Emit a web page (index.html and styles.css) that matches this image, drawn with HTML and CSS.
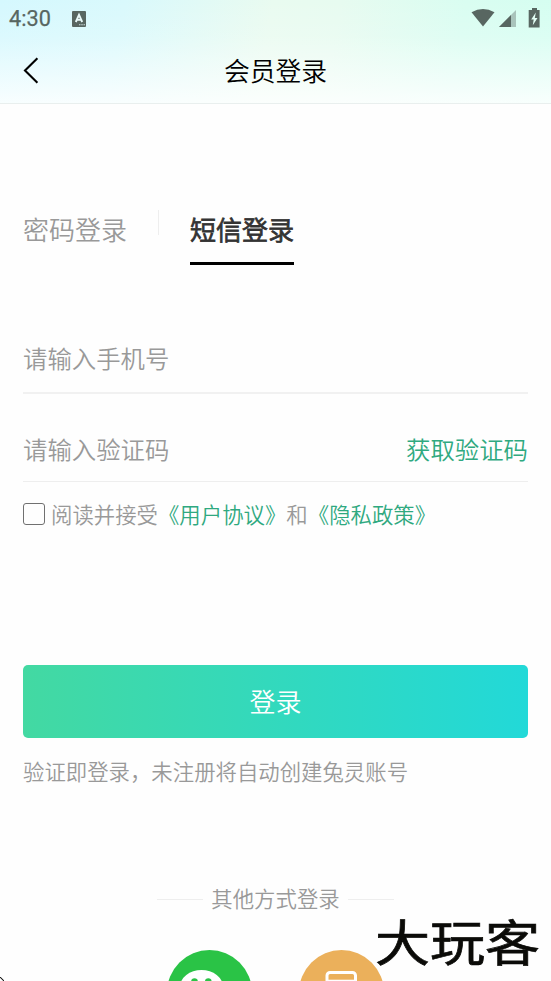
FILE: index.html
```html
<!DOCTYPE html>
<html lang="zh-CN">
<head>
<meta charset="utf-8">
<title>会员登录</title>
<link rel="stylesheet" href="styles.css">
</head>
<body>
<div class="screen">
  <header class="header">
    <div class="status">
      <span class="clock">4:30</span>
      <svg class="app-badge" width="14" height="16" viewBox="0 0 14 16"><rect width="14" height="16" rx="1" fill="#586661"/><path d="M3.8 11 7 3.8l3.2 7.2M4.8 8.9h4.4" fill="none" stroke="#eafafa" stroke-width="1.9"/><path d="M7.2 13.7h1.2m1 0h1.2m1 0h1.2" stroke="#eafafa" stroke-width="1.1"/></svg>
      <svg class="signals" width="72" height="22" viewBox="0 0 72 22"><path d="M0.5 4.2Q12 -2.4 23.5 4.2L12 18.5Z" fill="#586661"/><path d="M28 19 45 2V19Z" fill="#a9c3bb"/><path d="M28 19 40 7V19Z" fill="#586661"/><path d="M58.3 2H61V0h5v2h2.6v17.5H57.7V2Z" fill="#586661"/><path d="M64.8 4.5 60.2 11.6h2.5l-.9 5.6 4.7-7.2h-2.7Z" fill="#e4fff6"/></svg>
    </div>
    <nav class="navbar">
      <svg class="back" width="16" height="28" viewBox="0 0 16 28"><path d="M14.4 1.3 2 13.6 14.4 25.7" fill="none" stroke="#000" stroke-width="2.1"/></svg>
      <h1>会员登录</h1>
    </nav>
  </header>
  <main>
    <div class="tabs">
      <div class="tab">密码登录</div>
      <div class="separator"></div>
      <div class="tab active">短信登录</div>
    </div>
    <div class="field phone">请输入手机号</div>
    <div class="field code"><span>请输入验证码</span><span class="link">获取验证码</span></div>
    <div class="agree"><span class="checkbox"></span><span>阅读并接受<span class="link">《用户协议》</span>和<span class="link">《隐私政策》</span></span></div>
    <div class="submit">登录</div>
    <p class="hint">验证即登录，未注册将自动创建兔灵账号</p>
    <div class="other"><i></i><span>其他方式登录</span><i></i></div>
    <div class="providers">
      <svg width="85" height="85" viewBox="0 0 85 85"><circle cx="42.5" cy="42.5" r="42.5" fill="#2ac346"/><ellipse cx="34.5" cy="37" rx="21.5" ry="17" fill="#fff"/><circle cx="27.5" cy="31.5" r="3.3" fill="#2ac346"/><circle cx="41.3" cy="31.5" r="3.3" fill="#2ac346"/></svg>
      <svg width="85" height="85" viewBox="0 0 85 85"><circle cx="42.5" cy="42.5" r="42.5" fill="#ebb05b"/><rect x="28" y="22.5" width="28.5" height="42" rx="3" fill="none" stroke="#fff" stroke-width="3"/><path d="M29 30.5h27" stroke="#fff" stroke-width="1.6"/></svg>
    </div>
  </main>
  <div class="watermark">大玩客</div>
  <svg class="corner" width="4" height="4" viewBox="0 0 4 4"><path d="M0 .5h1v1h1v1h1v1h1" fill="none" stroke="#222"/></svg>
</div>
</body>
</html>
```
FILE: styles.css
```css
* { box-sizing: border-box; }
body { margin: 0; background: #fefefe; font-family: "Noto Sans CJK SC", sans-serif; font-weight: 350; color: #999; }
.screen { position: relative; width: 551px; height: 981px; overflow: hidden; }
.header {
  height: 104px;
  border-bottom: 1px solid #e9efee;
  background:
    linear-gradient(180deg, rgba(255,255,255,0) 0%, rgba(255,255,255,.15) 35%, rgba(254,255,255,.85) 100%),
    linear-gradient(100deg, #d5f8fe 0%, #d9f9fc 22%, #e9fbf0 48%, #e7fbf0 60%, #d9fdf1 82%, #d5fef1 100%);
}
.status { height: 38px; display: flex; align-items: center; padding: 0 8px 0 9px; color: #586661; }
.clock { width: 63px; font: 400 21.7px/40px Roboto, sans-serif; -webkit-text-stroke: .25px #586661; }
.signals { margin-left: auto; }
.app-badge { margin-top: -1px; }
.navbar { height: 65px; display: grid; grid-template-columns: 60px 1fr 60px; align-items: center; }
.back { margin-left: 23px; }
h1 { margin: 0; text-align: center; font-size: 25.8px; font-weight: 350; line-height: 63px; height: 65px; color: #000; }
main { padding: 0 23px; }
.tabs { display: flex; align-items: flex-start; height: 161px; padding-top: 106px; }
.tab { height: 55px; font-size: 26px; line-height: 37px; }
.tab.active { color: #333; -webkit-text-stroke: .8px #333; border-bottom: 3px solid #000; }
.separator { width: 1px; height: 25px; margin: 0 31px; background: #eee; }
.field { display: flex; justify-content: space-between; font-size: 24.4px; }
.phone { margin-top: 59px; height: 70px; line-height: 68px; border-bottom: 2px solid #f1f1f1; }
.code { height: 88px; line-height: 109px; border-bottom: 1px solid #eee; }
.link { color: #2fa980; }
.agree { display: flex; align-items: center; gap: 6px; height: 63px; font-size: 21.4px; line-height: 32px; white-space: nowrap; }
.checkbox { width: 22px; height: 22px; border: 1.5px solid #707070; border-radius: 3px; }
.submit { height: 73px; margin-top: 120px; border-radius: 5px; background: linear-gradient(90deg, #43d9a2, #22d9d8); color: #fff; font-size: 26px; line-height: 72px; text-align: center; }
.hint { margin: 16px 0 0; height: 34px; font-size: 21.4px; line-height: 34px; white-space: nowrap; }
.other { display: flex; align-items: center; justify-content: center; gap: 8px; margin-top: 94px; height: 34px; font-size: 21.4px; line-height: 32px; }
.other span { margin-top: -2px; }
.other i { width: 46px; height: 1px; background: #eee; }
.providers { display: flex; justify-content: center; gap: 47px; margin-top: 34px; }
.providers svg { flex: none; }
.watermark { position: absolute; left: 375px; top: 910px; color: #0b0b08; font-size: 55px; font-weight: 400; -webkit-text-stroke: .8px #0b0b08; line-height: 60px; white-space: nowrap; transform: scaleY(.88); }
.corner { position: absolute; left: 0; top: 977px; }
```
